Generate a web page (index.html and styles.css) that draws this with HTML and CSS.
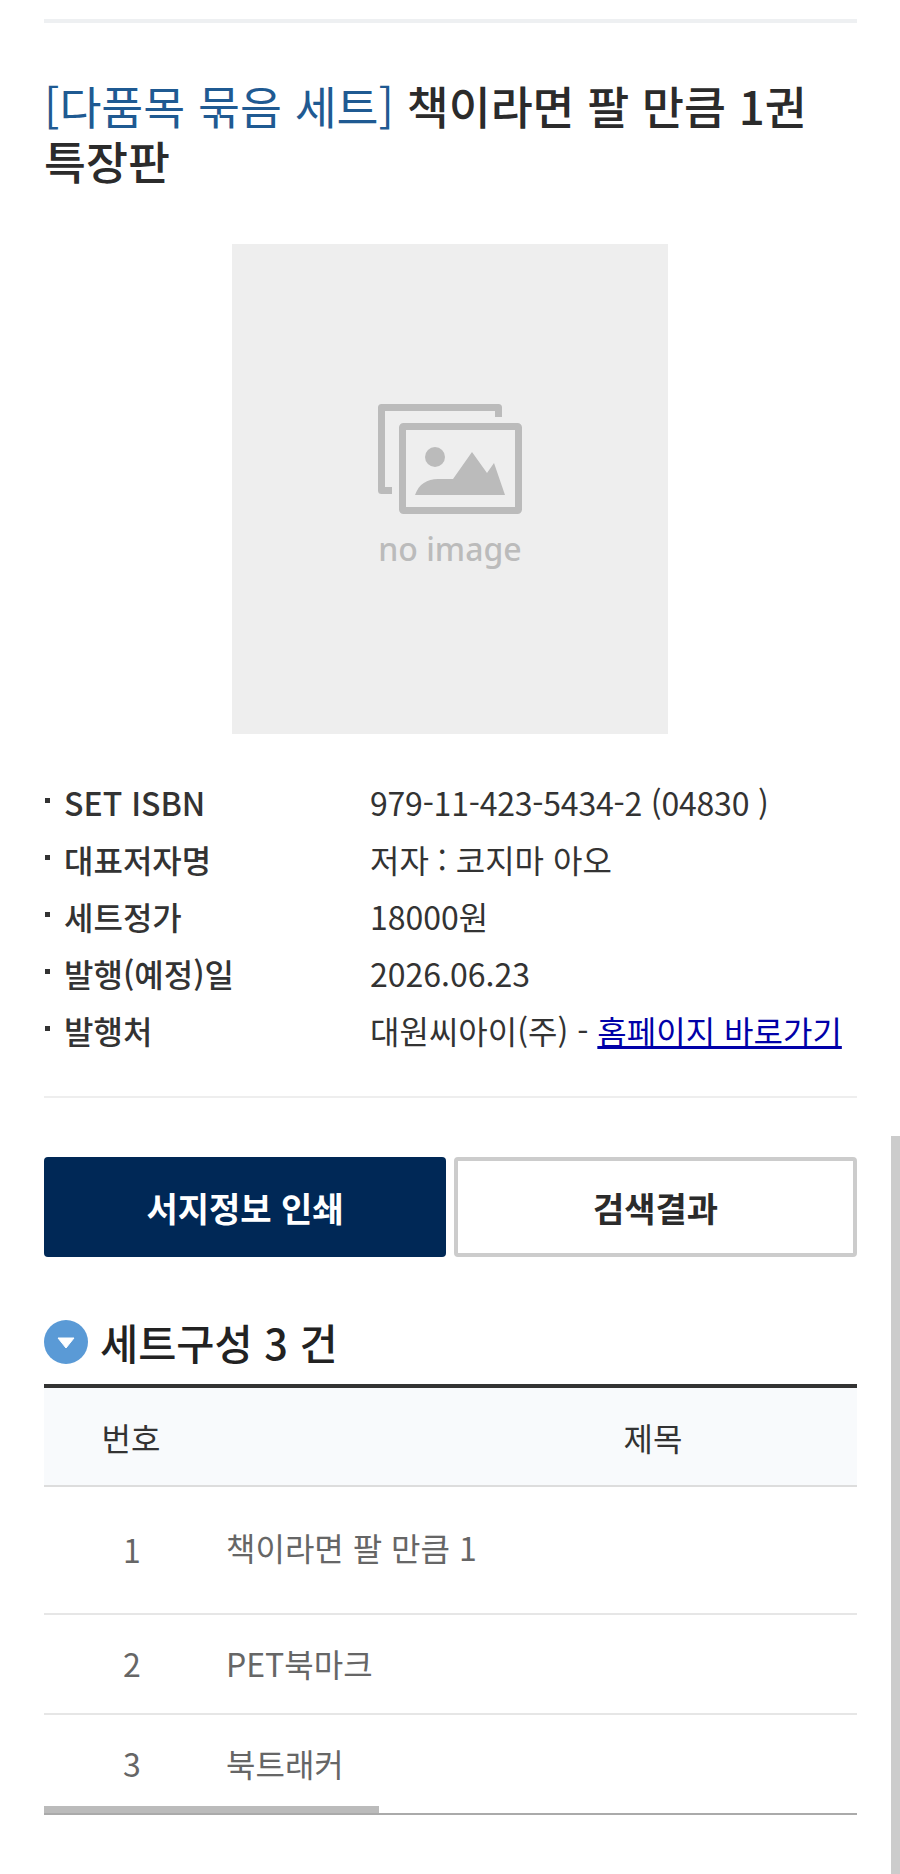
FILE: index.html
```html
<!DOCTYPE html>
<html lang="ko">
<head>
  <meta charset="UTF-8">
  <title>세트 상세</title>
  <link rel="stylesheet" href="styles.css">
</head>
<body>
  <div id="wrap">
    <h1 class="title"><span class="tag">[다품목 묶음 세트]</span> <span>책이라면 팔 만큼 1권</span> <span>특장판</span></h1>

    <div class="cover">
      <svg class="cover-icon" width="144" height="110" viewBox="0 0 144 110">
        <path d="M120.5 13V3.5H3.5V86.5H14" class="frame"/>
        <rect x="24.5" y="22.5" width="116" height="84" rx="1" class="frame"/>
        <circle cx="57" cy="53" r="10" fill="#bbb"/>
        <path d="M37 91C41 80 49 75 60 75H75L94 48L109 69L116 59L127 91Z" fill="#bbb"/>
      </svg>
      <div class="cover-text">no image</div>
    </div>

    <ul class="info">
      <li><span class="info-label">SET ISBN</span><span class="num">979-11-423-5434-2 (04830 )</span></li>
      <li><span class="info-label">대표저자명</span><span>저자 : 코지마 아오</span></li>
      <li><span class="info-label">세트정가</span><span>18000원</span></li>
      <li><span class="info-label">발행(예정)일</span><span>2026.06.23</span></li>
      <li><span class="info-label">발행처</span><span>대원씨아이(주) - <a href="#">홈페이지 바로가기</a></span></li>
    </ul>

    <div class="buttons">
      <a class="btn btn-dark" href="#">서지정보 인쇄</a>
      <a class="btn btn-line" href="#">검색결과</a>
    </div>

    <h2 class="section">
      <svg width="44" height="44" viewBox="0 0 44 44">
        <circle cx="22" cy="22" r="22" fill="#5a9ad6"/>
        <path d="M14 18H30L22 28Z" fill="#fff" stroke="#fff" stroke-width="1" stroke-linejoin="round"/>
      </svg>
      세트구성 3 건
    </h2>

    <div class="table-box">
      <table class="list">
        <thead>
          <tr><th class="col-no">번호</th><th class="col-title">제목</th></tr>
        </thead>
        <tbody>
          <tr class="first"><td class="col-no">1</td><td class="name"><span>책이라면 팔 만큼 1</span></td></tr>
          <tr><td class="col-no">2</td><td class="name">PET북마크</td></tr>
          <tr><td class="col-no">3</td><td class="name">북트래커</td></tr>
        </tbody>
      </table>
      <div class="thumb"></div>
    </div>
  </div>
  <div class="page-scroll"></div>
</body>
</html>
```

FILE: styles.css
```css
html, body {
  margin: 0;
  padding: 0;
  background: #fff;
  color: #333;
  font-family: "Noto Sans CJK KR", "Noto Sans", sans-serif;
}
body {
  height: 1874px;
  overflow: hidden;
}
#wrap {
  margin: 19px 43px 0 44px;
  border-top: 4px solid #eef0f2;
}
.title {
  margin: 55px 0 0;
  font-size: 45.6px;
  line-height: 55px;
  font-weight: 500;
  color: #2b2b2b;
  word-break: keep-all;
}
.tag {
  color: #1f5a92;
  font-weight: 400;
}
.cover {
  width: 436px;
  height: 490px;
  margin: 56px 0 0 188px;
  padding-top: 160px;
  box-sizing: border-box;
  background: #eee;
  display: flex;
  flex-direction: column;
  align-items: center;
}
.cover-icon {
  display: block;
}
.frame {
  fill: none;
  stroke: #bbb;
  stroke-width: 7;
  stroke-linejoin: round;
}
.cover-text {
  margin-top: 10px;
  font-family: "Noto Sans", sans-serif;
  font-size: 32px;
  font-weight: 500;
  line-height: 50px;
  color: #bbb;
}
.info {
  list-style: none;
  margin: 40px 0 0;
  padding: 0 0 37px;
  border-bottom: 2px solid #eee;
  font-size: 32px;
  line-height: 57px;
}
.info li {
  display: flex;
  position: relative;
  padding-left: 20px;
}
.info li::before {
  content: "";
  position: absolute;
  left: 1px;
  top: 24px;
  width: 5px;
  height: 5px;
  background: #333;
}
.info-label {
  width: 306px;
  font-weight: 500;
}
.num {
  letter-spacing: -0.2px;
}
.info a {
  color: #0000a8;
}
.buttons {
  display: grid;
  grid-template-columns: 402px 1fr;
  gap: 8px;
  margin-top: 59px;
}
.btn {
  height: 100px;
  box-sizing: border-box;
  border-radius: 4px;
  display: flex;
  align-items: center;
  justify-content: center;
  font-size: 34px;
  font-weight: 700;
  text-decoration: none;
}
.btn-dark {
  background: #002856;
  color: #fff;
}
.btn-line {
  border: 4px solid #ccc;
  color: #2b2b2b;
}
.section {
  display: flex;
  align-items: center;
  gap: 12px;
  margin: 55px 0 0;
  font-size: 41.5px;
  line-height: 60px;
  font-weight: 500;
  color: #222;
}
.table-box {
  position: relative;
  overflow: hidden;
  margin-top: 12px;
  border-top: 4px solid #333;
  border-bottom: 2px solid #aaa;
}
.list {
  width: 1044px;
  border-collapse: collapse;
  table-layout: fixed;
  font-size: 32px;
}
.list th {
  height: 95px;
  background: #f8fafc;
  border-bottom: 2px solid #ddd;
  font-weight: 400;
  color: #333;
}
.col-no {
  width: 174px;
  text-align: center;
  padding: 0;
}
.list td {
  height: 96px;
  border-bottom: 2px solid #e6e6e6;
  color: #666;
  padding: 0 0 2px;
}
.list td.col-no {
  padding-left: 2px;
}
.list tr:last-child td {
  border-bottom: 0;
}
.list .first td {
  height: 124px;
}
.name {
  padding-left: 8px !important;
}
.first .name span {
  display: block;
  margin-bottom: 4px;
}
.thumb {
  position: absolute;
  left: 0;
  bottom: 0;
  width: 335px;
  height: 7px;
  background: #bbb;
}
.page-scroll {
  position: absolute;
  right: 0;
  top: 1136px;
  width: 9px;
  height: 738px;
  background: #ccc;
}
```
